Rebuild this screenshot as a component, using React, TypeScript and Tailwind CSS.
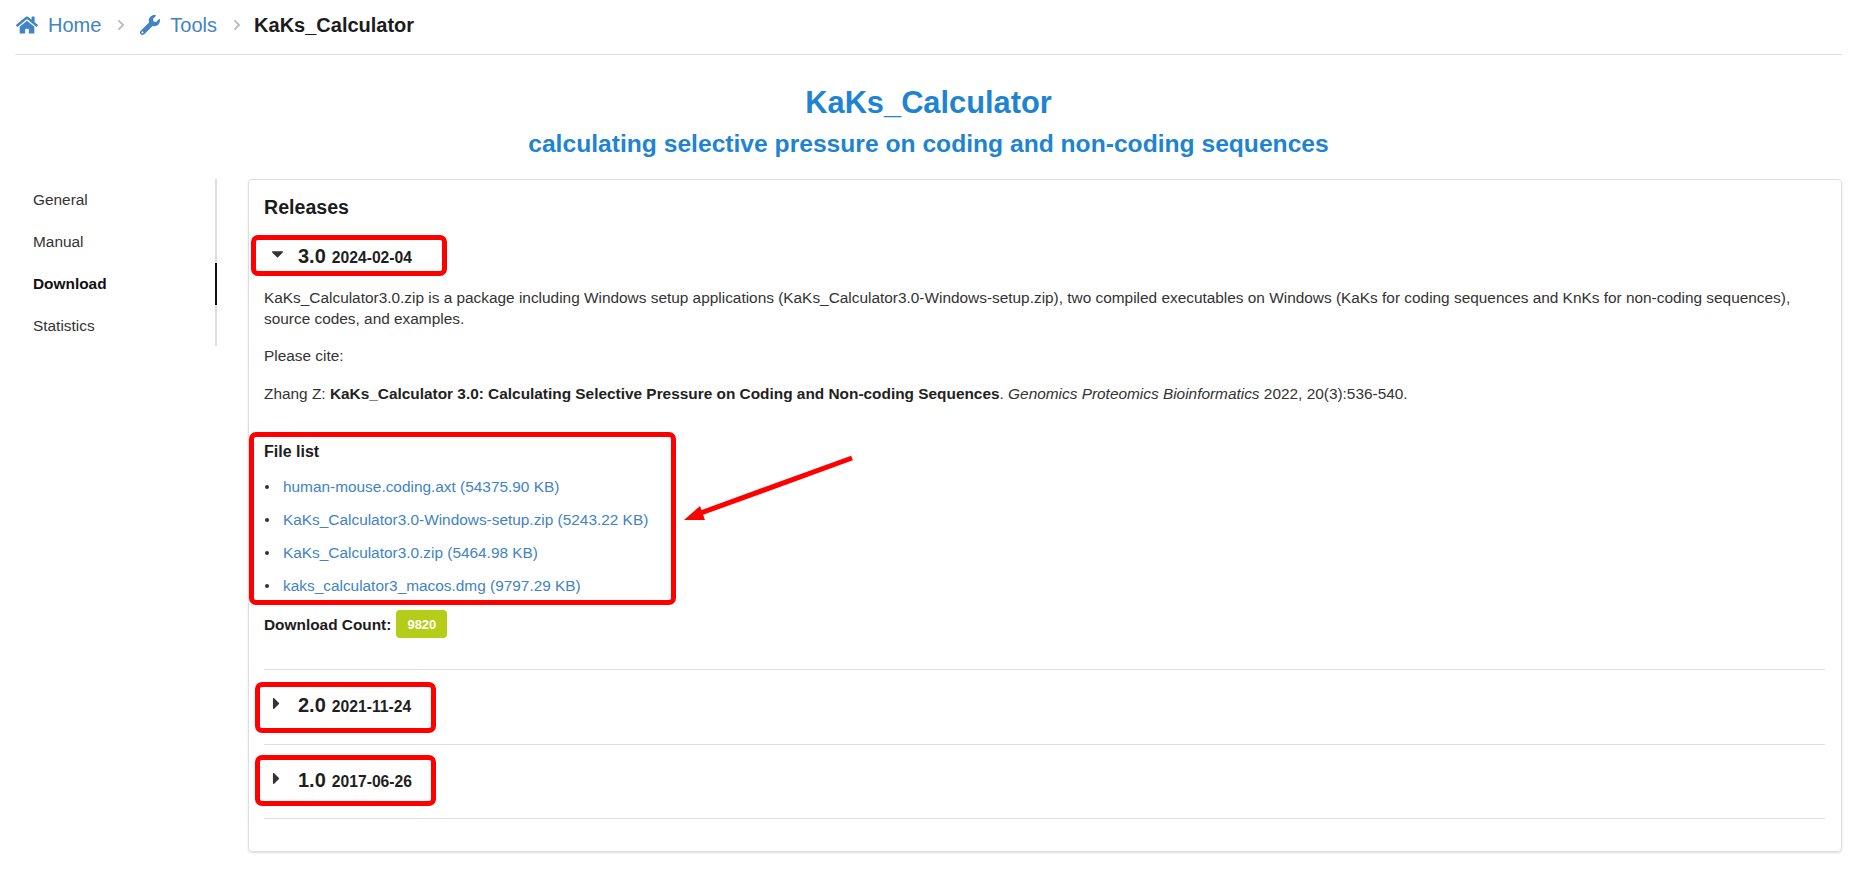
import { FaHome, FaWrench, FaChevronRight, FaCaretDown, FaCaretRight } from "react-icons/fa";

const files = [
  "human-mouse.coding.axt (54375.90 KB)",
  "KaKs_Calculator3.0-Windows-setup.zip (5243.22 KB)",
  "KaKs_Calculator3.0.zip (5464.98 KB)",
  "kaks_calculator3_macos.dmg (9797.29 KB)",
];

function Release({ v, d, open }: { v: string; d: string; open?: boolean }) {
  return (
    <div className="flex items-center h-[24px] text-[#1f1f1f] font-bold">
      <span className="w-[34px] pl-[4px] flex items-center">
        {open ? <FaCaretDown className="text-[19px] text-[#333] -mt-[5px]" /> : <FaCaretRight className="text-[19px] text-[#333] -ml-[1px] -mt-[3px]" />}
      </span>
      <span className="text-[20px] mr-[6px]">{v}</span>
      <span className="text-[15.68px] pt-[2px]">{d}</span>
    </div>
  );
}

function Mark({ className }: { className: string }) {
  return <div className={"absolute border-[5px] border-[#ff0000] rounded-[7px] " + className} />;
}

export default function App() {
  return (
    <div className="relative w-[1857px] h-[884px] overflow-hidden bg-white text-[15.4px] leading-[21px] text-[#222] font-['Liberation_Sans',Arial,sans-serif]">
      <nav className="mx-[15px] h-[55px] border-b border-[#dedede] flex items-center pb-[4px] text-[20px]">
        <FaHome className="text-[#4183c4] text-[22px] ml-[1px]" />
        <span className="text-[#4183c4] ml-[10px]">Home</span>
        <FaChevronRight className="text-[#bbb] text-[12px] ml-[14px] mr-[13px]" />
        <FaWrench className="text-[#4183c4] text-[20px]" />
        <span className="text-[#4183c4] ml-[10px]">Tools</span>
        <FaChevronRight className="text-[#bbb] text-[12px] ml-[14px]" />
        <span className="font-bold text-[#1c1c1c] ml-[11px]">KaKs_Calculator</span>
      </nav>

      <header className="text-center text-[#1e84d2] font-bold mt-[29px]">
        <h1 className="text-[30.8px] leading-[38px]">KaKs_Calculator</h1>
        <h2 className="text-[24.64px] leading-[30px] mt-[7px]">calculating selective pressure on coding and non-coding sequences</h2>
      </header>

      <div className="flex mt-[20px] px-[15px]">
        <aside className="w-[202px] h-[167px] border-r-2 border-[#dedede] shrink-0">
          {["General", "Manual", "Download", "Statistics"].map((t) => (
            <div
              key={t}
              className={
                "h-[42px] flex items-center pl-[18px] pb-[2px] -mr-[2px] " +
                (t === "Download" ? "font-bold text-[#111] border-r-2 border-[#111]" : "text-[#333]")
              }
            >
              {t}
            </div>
          ))}
        </aside>

        <main className="ml-[31px] w-[1594px] h-[673px] border border-[#dedede] rounded-[4px] shadow-[0_1px_2px_rgba(34,36,38,0.15)] pl-[15px] pr-[16px] pt-[14px]">
          <h3 className="text-[19.6px] leading-[26px] font-bold text-[#1c1c1c]">Releases</h3>
          <div className="mt-[24px]">
            <Release v="3.0" d="2024-02-04" open />
          </div>
          <p className="mt-[19px] mb-[16px] text-[#333]">
            KaKs_Calculator3.0.zip is a package including Windows setup applications (KaKs_Calculator3.0-Windows-setup.zip), two compiled executables on Windows (KaKs for coding sequences and KnKs for non-coding sequences), source codes, and examples.
          </p>
          <p className="mb-[17px] text-[#333]">Please cite:</p>
          <p className="text-[#333]">
            Zhang Z: <b className="text-[#222]">KaKs_Calculator 3.0: Calculating Selective Pressure on Coding and Non-coding Sequences</b>. <i>Genomics Proteomics Bioinformatics</i> 2022, 20(3):536-540.
          </p>
          <h4 className="font-bold text-[#1c1c1c] text-[16px] mt-[37px]">File list</h4>
          <ul className="mt-[14px] flex flex-col gap-[12px]">
            {files.map((f) => (
              <li key={f} className="flex items-center text-[#4183c4]">
                <span className="w-[4px] h-[4px] rounded-full bg-[#333] ml-[1px] mr-[14px]" />
                {f}
              </li>
            ))}
          </ul>
          <div className="mt-[14px] flex items-center font-bold text-[#1c1c1c]">
            Download Count:
            <span className="ml-[5px] h-[28px] w-[51px] rounded-[4px] bg-[#b5cc18] text-white text-[13px] flex items-center justify-center">9820</span>
          </div>
          <div className="mt-[31px] border-t border-[#dedede] pt-[23px]">
            <Release v="2.0" d="2021-11-24" />
          </div>
          <div className="mt-[27px] border-t border-[#dedede] pt-[23px]">
            <Release v="1.0" d="2017-06-26" />
          </div>
          <div className="mt-[26px] border-t border-[#dedede]" />
        </main>
      </div>

      <Mark className="left-[251px] top-[235px] w-[196px] h-[41px]" />
      <Mark className="left-[249px] top-[432px] w-[427px] h-[173px]" />
      <Mark className="left-[255px] top-[682px] w-[181px] h-[51px]" />
      <Mark className="left-[255px] top-[755px] w-[181px] h-[51px]" />

      <svg className="absolute left-0 top-0 pointer-events-none" width="1857" height="884" fill="none">
        <path d="M852 458 L698 514" stroke="#ff0000" strokeWidth="5" />
        <path d="M684 520 L700 506 L705 520 Z" fill="#ff0000" />
      </svg>
    </div>
  );
}
